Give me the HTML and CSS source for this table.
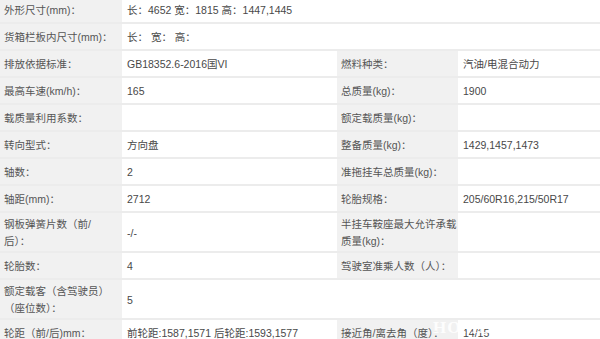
FILE: index.html
```html
<!DOCTYPE html>
<html lang="zh-CN">
<head>
<meta charset="utf-8">
<title>参数</title>
<link rel="stylesheet" href="styles.css">
</head>
<body>
<div class="spec">
  <div class="row"><div class="lab">外形尺寸(mm)：</div><div class="val wide">长：4652 宽：1815 高：1447,1445</div></div>
  <div class="row"><div class="lab">货箱栏板内尺寸(mm)：</div><div class="val wide">长：&nbsp;宽：&nbsp;高：</div></div>
  <div class="row"><div class="lab">排放依据标准：</div><div class="val">GB18352.6-2016国VI</div><div class="lab">燃料种类：</div><div class="val">汽油/电混合动力</div></div>
  <div class="row"><div class="lab">最高车速(km/h)：</div><div class="val">165</div><div class="lab">总质量(kg)：</div><div class="val">1900</div></div>
  <div class="row"><div class="lab">载质量利用系数：</div><div class="val"></div><div class="lab">额定载质量(kg)：</div><div class="val"></div></div>
  <div class="row"><div class="lab">转向型式：</div><div class="val">方向盘</div><div class="lab">整备质量(kg)：</div><div class="val">1429,1457,1473</div></div>
  <div class="row"><div class="lab">轴数：</div><div class="val">2</div><div class="lab">准拖挂车总质量(kg)：</div><div class="val"></div></div>
  <div class="row"><div class="lab">轴距(mm)：</div><div class="val">2712</div><div class="lab">轮胎规格：</div><div class="val">205/60R16,215/50R17</div></div>
  <div class="row"><div class="lab">钢板弹簧片数（前/<br>后）：</div><div class="val">-/-</div><div class="lab">半挂车鞍座最大允许承载<br>质量(kg)：</div><div class="val"></div></div>
  <div class="row"><div class="lab">轮胎数：</div><div class="val">4</div><div class="lab">驾驶室准乘人数（人）：</div><div class="val"></div></div>
  <div class="row"><div class="lab">额定载客（含驾驶员）<br>（座位数）：</div><div class="val wide">5</div></div>
  <div class="row"><div class="lab">轮距（前/后)mm：</div><div class="val">前轮距:1587,1571 后轮距:1593,1577</div><div class="lab">接近角/离去角（度）：</div><div class="val">14/15</div></div>
  <span class="mark">HOME</span>
</div>
</body>
</html>
```
FILE: styles.css
```css
html, body {
  margin: 0;
  padding: 0;
  background: #ffffff;
}
body {
  width: 600px;
  height: 339px;
  overflow: hidden;
  font-family: "Liberation Sans", "Noto Sans CJK SC", sans-serif;
  font-size: 10.5px;
  color: #505050;
}
.spec {
  position: relative;
  margin-top: -3px;
}
.row {
  display: grid;
  grid-template-columns: 122px 215px 121px 1fr;
  min-height: 27px;
  box-sizing: border-box;
  border-bottom: 2px solid #ececec;
}
.lab, .val {
  display: flex;
  align-items: center;
  line-height: 17px;
  padding: 3px 4px 1px;
  white-space: nowrap;
  overflow: hidden;
}
.lab {
  background: #f1f1f1;
  color: #555555;
}
.val {
  padding-left: 5px;
  color: #484848;
}
.wide {
  grid-column: 2 / -1;
}
.mark {
  position: absolute;
  left: 433px;
  top: 321px;
  font-family: "Liberation Serif", serif;
  font-weight: bold;
  font-size: 17px;
  letter-spacing: 1px;
  color: rgba(255, 255, 255, 0.9);
}
```
